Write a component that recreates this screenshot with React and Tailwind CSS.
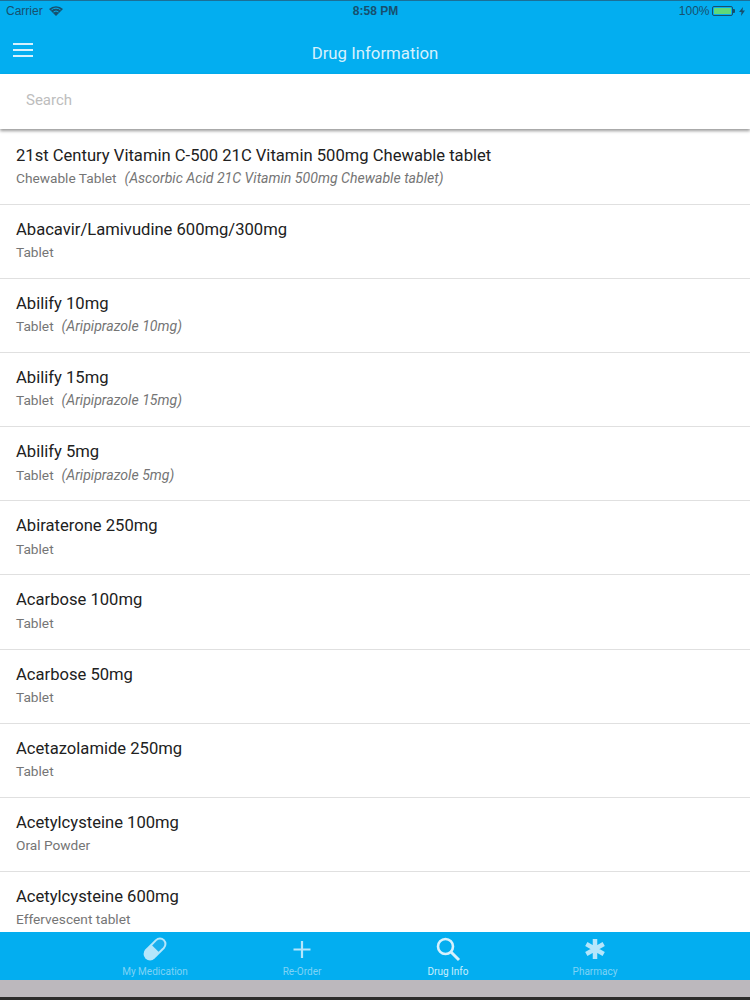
import React from 'react';

const drugs = [
    { name: '21st Century Vitamin C-500 21C Vitamin 500mg Chewable tablet', form: 'Chewable Tablet', generic: '(Ascorbic Acid 21C Vitamin 500mg Chewable tablet)' },
    { name: 'Abacavir/Lamivudine 600mg/300mg', form: 'Tablet' },
    { name: 'Abilify 10mg', form: 'Tablet', generic: '(Aripiprazole 10mg)' },
    { name: 'Abilify 15mg', form: 'Tablet', generic: '(Aripiprazole 15mg)' },
    { name: 'Abilify 5mg', form: 'Tablet', generic: '(Aripiprazole 5mg)' },
    { name: 'Abiraterone 250mg', form: 'Tablet' },
    { name: 'Acarbose 100mg', form: 'Tablet' },
    { name: 'Acarbose 50mg', form: 'Tablet' },
    { name: 'Acetazolamide 250mg', form: 'Tablet' },
    { name: 'Acetylcysteine 100mg', form: 'Oral Powder' },
    { name: 'Acetylcysteine 600mg', form: 'Effervescent tablet' },
];

function PillIcon() {
    return (
        <svg width="28" height="26" viewBox="0 0 28 26">
            <g transform="rotate(-45 14 13)">
                <rect x="0.5" y="6.5" width="27" height="13" rx="6.5" fill="#b5e6fb" />
                <path d="M14.5 8.500h6.500a4.500 4.500 0 0 1 0 9h-6.500z" fill="#1ab0ee" />
            </g>
        </svg>
    );
}

function PlusIcon() {
    return (
        <svg width="26" height="26" viewBox="0 0 26 26">
            <path d="M13 5v17M4.500 13.500h17" stroke="#b5e6fb" strokeWidth="2.200" fill="none" />
        </svg>
    );
}

function SearchIcon() {
    return (
        <svg width="26" height="26" viewBox="0 0 26 26">
            <circle cx="10.500" cy="10.500" r="7.500" stroke="#d6f1fd" strokeWidth="2.600" fill="none" />
            <path d="M16 16l8 8" stroke="#d6f1fd" strokeWidth="3" fill="none" />
        </svg>
    );
}

function AsteriskIcon() {
    return (
        <svg width="26" height="26" viewBox="0 0 26 26">
            <path d="M13 3v20M4.300 8l17.400 10M21.700 8L4.300 18" stroke="#b5e6fb" strokeWidth="4.500" fill="none" />
        </svg>
    );
}

function Tab({ icon, label, active, className }) {
    return (
        <div className={`flex flex-col items-center w-[100px] ${className}`}>
            <div className="h-[26px] mt-[4px] flex items-center justify-center">{icon}</div>
            <span className={`text-[10px] leading-[12px] mt-[4px] ${active ? 'text-[#c9eefc]' : 'text-[#7fd3f5]'}`}>{label}</span>
        </div>
    );
}

export default function App() {
    return (
        <div className="w-[750px] h-[1000px] flex flex-col overflow-hidden bg-white font-['Roboto',sans-serif]">
            <div className="h-[74px] shrink-0 bg-[#03aef0] border-t border-[#1b6f97] relative">
                <div className="h-[20px] flex items-center justify-between pl-[6px] pr-[5px] text-[12px] text-[#17506e]">
                    <div className="flex items-center gap-[6px] w-[200px]">
                        <span className="font-['Liberation_Sans',sans-serif]">Carrier</span>
                        <svg width="14" height="10" viewBox="0 0 14 10">
                            <path d="M7 10L0 3a10 10 0 0 1 14 0z" fill="#17506e" />
                            <path d="M2.500 3.800a7 7 0 0 1 9 0" stroke="#03aef0" strokeWidth="1" fill="none" />
                            <path d="M4.500 6a4 4 0 0 1 5 0" stroke="#03aef0" strokeWidth="1" fill="none" />
                        </svg>
                    </div>
                    <span className="font-['Liberation_Sans',sans-serif] font-bold">8:58 PM</span>
                    <div className="flex items-center justify-end w-[200px]">
                        <span className="font-['Liberation_Sans',sans-serif] mr-[3px]">100%</span>
                        <div className="w-[21px] h-[10px] border border-[#17506e] rounded-[2px] p-[1px]">
                            <div className="w-full h-full bg-[#5fd97a]" />
                        </div>
                        <div className="w-[1.500px] h-[4px] bg-[#17506e] rounded-r-[1px]" />
                        <svg width="6" height="9" viewBox="0 0 6 9" className="ml-[4px]">
                            <path d="M4 0L0 5h2.500L2 9l4-5.500H3.500z" fill="#17506e" />
                        </svg>
                    </div>
                </div>
                <div className="absolute left-[13px] top-[42px] w-[20px] flex flex-col gap-[4px]">
                    <div className="h-[2px] bg-[#d6f1fd]" />
                    <div className="h-[2px] bg-[#d6f1fd]" />
                    <div className="h-[2px] bg-[#d6f1fd]" />
                </div>
                <div className="text-center text-[16.800px] leading-[20px] text-[#d6f1fd] mt-[22px]">Drug Information</div>
            </div>

            <div className="h-[55px] shrink-0 bg-white flex items-center pl-[26px] pb-[3px] text-[15px] text-[#bdbdbd] shadow-[0_2px_3px_rgba(0,0,0,0.4)] relative z-10">
                Search
            </div>

            <div className="flex-1 min-h-0 overflow-hidden pt-[1.600px]">
                {drugs.map((d) => (
                    <div key={d.name} className="h-[74.150px] box-border border-b border-[#e0e0e0] pl-[16px] pt-[14px]">
                        <div className="text-[16.600px] leading-[22px] text-[#212121]">{d.name}</div>
                        <div className="text-[13.700px] leading-[18px] mt-[2.400px] text-[#757575]">
                            {d.form}
                            {d.generic && <span className="italic text-[14.100px] ml-[8px]">{d.generic}</span>}
                        </div>
                    </div>
                ))}
            </div>

            <div className="h-[48px] shrink-0 bg-[#03aef0] flex pl-[105px]">
                <Tab icon={<PillIcon />} label="My Medication" />
                <Tab icon={<PlusIcon />} label="Re-Order" className="ml-[47px]" />
                <Tab icon={<SearchIcon />} label="Drug Info" active className="ml-[46px]" />
                <Tab icon={<AsteriskIcon />} label="Pharmacy" className="ml-[47px]" />
            </div>
            <div className="h-[17px] shrink-0 bg-[#bcb8bd]" />
            <div className="h-[3px] shrink-0 bg-[#2b2b2b]" />
        </div>
    );
}
